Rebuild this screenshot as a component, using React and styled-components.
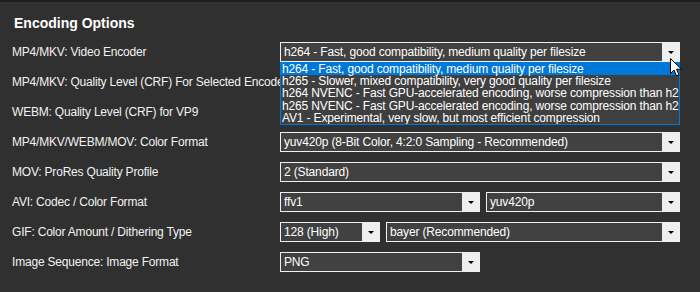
import React from "react";
import styled, { createGlobalStyle } from "styled-components";

const Global = createGlobalStyle`
    html, body {
        margin: 0;
        background: #303030;
    }
`

const Page = styled.div`
    width: 700px;
    height: 292px;
    overflow: hidden;
    background: #303030;
    border-top: 2px solid #1d1d1d;
    box-sizing: border-box;
    padding: 11px 0 0 12px;
    font-family: "Liberation Sans", Arial, sans-serif;
    color: #f2f2f2;
`

const Title = styled.h2`
    margin: 0 0 9px 2px;
    font-size: 14px;
    line-height: 20px;
    font-weight: bold;
    color: #ffffff;
`

const Rows = styled.div`
    display: flex;
    flex-direction: column;
    gap: 10px;
`

const Row = styled.div`
    display: grid;
    grid-template-columns: 268px 400px;
    height: 20px;
    align-items: center;
`

const Label = styled.span`
    font-size: 12px;
    letter-spacing: -0.2px;
    white-space: nowrap;
    overflow: visible;
`

const Controls = styled.div`
    position: relative;
    display: flex;
    gap: 6px;
    height: 20px;
    z-index: ${p => (p.$open ? 2 : 0)};
`

const SelectBox = styled.div`
    width: ${p => p.$w}px;
    height: 20px;
    box-sizing: border-box;
    border: 1px solid #f0f0f0;
    background: #414141;
    display: flex;
    align-items: center;
`

const Value = styled.span`
    flex: 1;
    padding-left: 3px;
    font-size: 12px;
    letter-spacing: -0.15px;
    white-space: nowrap;
    overflow: hidden;
    color: #ffffff;
`

const Arrow = styled.span`
    width: 17px;
    align-self: stretch;
    background: #efefef;
    display: flex;
    align-items: center;
    justify-content: center;
    &::after {
        content: "";
        border-left: 3px solid transparent;
        border-right: 3px solid transparent;
        border-top: 3px solid #000;
    }
`

const List = styled.div`
    position: absolute;
    top: 20px;
    left: 0;
    width: 400px;
    box-sizing: border-box;
    border: 1px solid #0078d7;
    background: #3f3f3f;
    overflow: hidden;
`

const Item = styled.div`
    height: 12.2px;
    line-height: 12px;
    padding-left: 1px;
    font-size: 12px;
    letter-spacing: -0.15px;
    white-space: nowrap;
    color: #ffffff;
    background: ${p => (p.$active ? "#0078d7" : "transparent")};
`

const Cursor = styled.svg`
    position: absolute;
    left: 390px;
    top: 16px;
    z-index: 3;
`

const encoders = [
    "h264 - Fast, good compatibility, medium quality per filesize",
    "h265 - Slower, mixed compatibility, very good quality per filesize",
    "h264 NVENC - Fast GPU-accelerated encoding, worse compression than h265",
    "h265 NVENC - Fast GPU-accelerated encoding, worse compression than h265",
    "AV1 - Experimental, very slow, but most efficient compression",
]

function Select({ w = 400, value }) {
    return (
        <SelectBox $w={w}>
            <Value>{value}</Value>
            <Arrow />
        </SelectBox>
    )
}

export default function App() {
    return (
        <Page>
            <Global />
            <Title>Encoding Options</Title>
            <Rows>
                <Row>
                    <Label>MP4/MKV: Video Encoder</Label>
                    <Controls $open>
                        <Select value={encoders[0]} />
                        <List>
                            {encoders.map((e, i) => (
                                <Item key={i} $active={i === 0}>{e}</Item>
                            ))}
                        </List>
                        <Cursor width="13" height="19" viewBox="0 0 13 19">
                            <path d="M0.5 0.5 L0.5 15.5 L4 12 L6.5 17.8 L9 16.8 L6.6 11.2 L11.5 11.2 Z"
                                fill="#fff" stroke="#000" strokeWidth="1" />
                        </Cursor>
                    </Controls>
                </Row>
                <Row>
                    <Label>MP4/MKV: Quality Level (CRF) For Selected Encoder</Label>
                    <Controls />
                </Row>
                <Row>
                    <Label>WEBM: Quality Level (CRF) for VP9</Label>
                    <Controls />
                </Row>
                <Row>
                    <Label>MP4/MKV/WEBM/MOV: Color Format</Label>
                    <Controls>
                        <Select value="yuv420p (8-Bit Color, 4:2:0 Sampling - Recommended)" />
                    </Controls>
                </Row>
                <Row>
                    <Label>MOV: ProRes Quality Profile</Label>
                    <Controls>
                        <Select value="2 (Standard)" />
                    </Controls>
                </Row>
                <Row>
                    <Label>AVI: Codec / Color Format</Label>
                    <Controls>
                        <Select w={200} value="ffv1" />
                        <Select w={194} value="yuv420p" />
                    </Controls>
                </Row>
                <Row>
                    <Label>GIF: Color Amount / Dithering Type</Label>
                    <Controls>
                        <Select w={100} value="128 (High)" />
                        <Select w={294} value="bayer (Recommended)" />
                    </Controls>
                </Row>
                <Row>
                    <Label>Image Sequence: Image Format</Label>
                    <Controls>
                        <Select w={200} value="PNG" />
                    </Controls>
                </Row>
            </Rows>
        </Page>
    )
}
